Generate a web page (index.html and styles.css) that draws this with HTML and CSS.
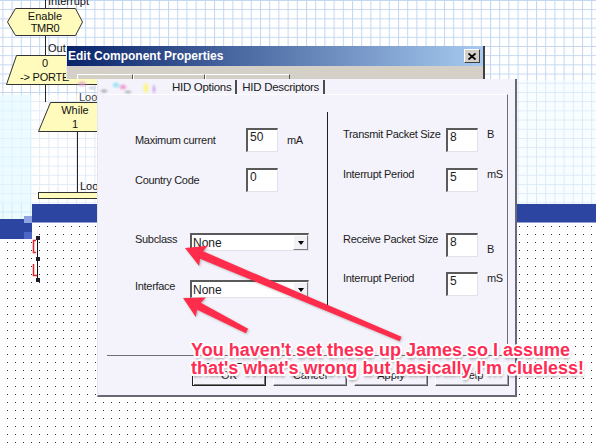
FILE: index.html
```html
<!DOCTYPE html>
<html lang="en">
<head>
    <meta charset="UTF-8">
    <title>Edit Component Properties</title>
    <link rel="stylesheet" href="styles.css">
</head>
<body>
<div class="desktop">
    <!-- flowchart canvas behind the dialogs -->
    <svg class="canvas" width="596" height="447" viewBox="0 0 596 447">
        <defs>
            <pattern id="grid" width="9.2" height="9.2" x="2.4" y="0" patternUnits="userSpaceOnUse">
                <path d="M0.5 0V9.2M0 0.5H9.2" fill="none" stroke="#c2d6ef" stroke-width="1"/>
            </pattern>
            <pattern id="dots" width="8" height="8" patternUnits="userSpaceOnUse">
                <rect x="7" y="2" width="1" height="1" fill="#2a2a2a"/>
            </pattern>
        </defs>
        <rect width="596" height="447" fill="#fff"/>
        <rect width="596" height="447" fill="url(#dots)"/>

        <rect width="596" height="204" fill="#fff"/>
        <rect width="596" height="204" fill="url(#grid)"/>
        <rect x="0" y="204" width="32" height="15" fill="#fff"/>
        <rect x="0" y="204" width="32" height="15" fill="url(#grid)"/>
        <!-- faded areas of the canvas -->
        <rect x="0" y="95" width="97" height="109" fill="#fff" opacity=".5"/>
        <rect x="0" y="95" width="32" height="124" fill="#dcf7ff" opacity=".55"/>
        <rect x="517" y="80" width="79" height="124" fill="#f3fbff" opacity=".55"/>

        <!-- selection bars -->
        <rect x="32" y="204" width="564" height="18.5" fill="#2c45a0"/>
        <rect x="0" y="219" width="32" height="20" fill="#2c45a0"/>
        <rect x="24" y="216" width="8" height="7" fill="#8ea3e2"/>
        <rect x="24" y="232" width="8" height="7" fill="#4b66c4"/>

        <!-- flowchart -->
        <g font-family="Liberation Sans, Arial, sans-serif" font-size="11" fill="#111">
            <path d="M45.5 0V8.5M45.5 35.5V55.5M45.5 84.5V102M77.5 131.5V192.5" stroke="#222" fill="none"/>
            <text x="48" y="5">Interrupt</text>
            <polygon points="7.5,22 15.5,8.5 75.5,8.5 82.5,22 75.5,35.5 15.5,35.5" fill="#fffbbd" stroke="#333"/>
            <text x="45" y="20" text-anchor="middle">Enable</text>
            <text x="45" y="32" text-anchor="middle" letter-spacing="-0.3">TMR0</text>
            <text x="48" y="52">Out</text>
            <polygon points="16.5,55.5 130,55.5 120,84.5 6.5,84.5" fill="#fffbbd" stroke="#333"/>
            <text x="45" y="67" text-anchor="middle">0</text>
            <text x="20" y="81" letter-spacing="-0.2">-&gt; PORTE</text>
            <text x="79" y="101" fill="#444">Loo</text>
            <polygon points="50.5,102.5 140,102.5 140,131.5 38.5,131.5" fill="#fffbbd" stroke="#333"/>
            <text x="75" y="114" text-anchor="middle">While</text>
            <text x="75" y="128" text-anchor="middle">1</text>
            <text x="80" y="190">Loo</text>
            <rect x="38.5" y="192.5" width="80" height="6" fill="#fffbbd" stroke="#333"/>
        </g>

        <!-- selected item handles -->
        <path d="M37.5 238V280" stroke="#111"/>
        <rect x="36" y="236" width="4" height="4" fill="#1c1c2c"/>
        <rect x="36" y="257" width="4" height="4" fill="#1c1c2c"/>
        <rect x="36" y="278" width="4" height="4" fill="#1c1c2c"/>
        <path d="M36 240.5H33.5V252.5H36M33.5 264V275.5H37" stroke="#e8202c" stroke-width="1.5" fill="none"/>
    </svg>

    <div class="dialog">
        <div class="dialog-title">
            <span class="dialog-caption">Edit Component Properties</span>
            <span class="close-btn">
                <svg width="8" height="7" viewBox="0 0 8 7"><path d="M0.5 0.5L7.5 6.5M7.5 0.5L0.5 6.5" stroke="#000" stroke-width="1.7"/></svg>
            </span>
        </div>
        <div class="tab-ghosts"><span></span><span></span><span></span></div>
    </div>

    <div class="panel">
        <div class="tabs">
            <span class="tab">HID Options</span>
            <span class="tab">HID Descriptors</span>
        </div>
        <div class="frame">
            <div class="col col-left">
                <div class="row">
                    <span class="lbl">Maximum current</span>
                    <span class="field">50</span>
                    <span class="unit">mA</span>
                </div>
                <div class="row row-gap">
                    <span class="lbl">Country Code</span>
                    <span class="field">0</span>
                </div>
                <div class="row row-combo row-section">
                    <span class="lbl">Subclass</span>
                    <span class="combo"><span class="combo-text">None</span><span class="combo-btn"></span></span>
                </div>
                <div class="row row-combo row-combo-next">
                    <span class="lbl">Interface</span>
                    <span class="combo"><span class="combo-text">None</span><span class="combo-btn"></span></span>
                </div>
            </div>
            <div class="divider"></div>
            <div class="col col-right">
                <div class="row">
                    <span class="lbl">Transmit Packet Size</span>
                    <span class="field">8</span>
                    <span class="unit">B</span>
                </div>
                <div class="row row-gap">
                    <span class="lbl">Interrupt Period</span>
                    <span class="field">5</span>
                    <span class="unit">mS</span>
                </div>
                <div class="row row-section">
                    <span class="lbl">Receive Packet Size</span>
                    <span class="field">8</span>
                    <span class="unit unit-low">B</span>
                </div>
                <div class="row row-gap-sm">
                    <span class="lbl">Interrupt Period</span>
                    <span class="field">5</span>
                    <span class="unit">mS</span>
                </div>
            </div>
        </div>
        <div class="actions">
            <span class="btn btn-default">OK</span>
            <span class="btn">Cancel</span>
            <span class="btn">Apply</span>
            <span class="btn">Help</span>
        </div>
    </div>

    <div class="glitch"></div>

    <svg class="arrows" width="596" height="447" viewBox="0 0 596 447">
        <g fill="#ff2d4b">
            <polygon transform="translate(185 248) rotate(22.9)" points="0,0 20,-11 18,-4 234,-2.5 234,2.5 18,4 20,11"/>
            <polygon transform="translate(183 298) rotate(27.3)" points="0,0 20,-11 18,-4 72,-2.5 72,2.5 18,4 20,11"/>
        </g>
    </svg>

    <p class="note">You haven't set these up James so I assume<br>that's what's wrong but basically I'm clueless!</p>
</div>
</body>
</html>
```

FILE: styles.css
```css
* {
    box-sizing: border-box;
    margin: 0;
    padding: 0;
}

body {
    width: 596px;
    height: 447px;
    overflow: hidden;
    font-family: "Liberation Sans", Arial, sans-serif;
    color: #1c1c1c;
}

.desktop {
    position: relative;
    width: 596px;
    height: 447px;
    overflow: hidden;
    background: #fff;
}

.canvas,
.arrows {
    position: absolute;
    left: 0;
    top: 0;
}

.arrows {
    pointer-events: none;
    filter: drop-shadow(1px 1px 1px rgba(0, 0, 0, 0.25));
}

/* grey dialog behind the property sheet */
.dialog {
    position: absolute;
    left: 66px;
    top: 46px;
    width: 419px;
    height: 33px;
    background: #d4d0c8;
    border-left: 1px solid #eeece6;
    border-right: 2px solid #404040;
}

.dialog-title {
    height: 20px;
    display: flex;
    align-items: center;
    padding: 0 3px 0 1px;
    background: linear-gradient(90deg, #0a246a, #a6caf0);
    color: #fff;
    font-size: 12px;
    font-weight: bold;
}

.dialog-caption {
    flex: 1;
}

.close-btn {
    width: 16px;
    height: 14px;
    display: flex;
    align-items: center;
    justify-content: center;
    background: #d4d0c8;
    border: 1px solid;
    border-color: #fff #404040 #404040 #fff;
}

.tab-ghosts {
    display: flex;
    padding: 8px 0 0 10px;
}

.tab-ghosts span {
    height: 5px;
    border-top: 1px solid #fff;
    border-left: 1px solid #fff;
    border-right: 1px solid #555;
}

.tab-ghosts span:nth-child(1) { width: 56px; }
.tab-ghosts span:nth-child(2) { width: 72px; }
.tab-ghosts span:nth-child(3) { width: 85px; }

/* property sheet */
.panel {
    position: absolute;
    left: 97px;
    top: 79px;
    width: 420px;
    height: 318px;
    background: #f4f3fb;
    border-left: 1px solid #e4e4ec;
    border-right: 2px solid #686876;
    border-bottom: 2px solid #686876;
}

.tabs {
    height: 15px;
    display: flex;
    align-items: center;
    padding-left: 74px;
    font-size: 11.5px;
    letter-spacing: -0.3px;
    color: #202020;
}

.tab {
    line-height: 14px;
    padding-right: 4px;
    border-right: 2px solid #4c4c4c;
}

.tab + .tab {
    padding-left: 5px;
}

.frame {
    margin-left: 9px;
    width: 401px;
    height: 262px;
    display: flex;
    border-top: 1px solid #fff;
    border-right: 1px solid #6e6e7c;
    border-bottom: 1px solid #6e6e7c;
}

.col-left {
    width: 220px;
    padding: 33px 0 0 28px;
}

.divider {
    width: 1px;
    height: 193px;
    margin-top: 17px;
    background: #1e1e1e;
}

.col-right {
    flex: 1;
    padding: 33px 0 0 15px;
}

.row {
    display: flex;
    height: 24px;
    font-size: 11px;
    letter-spacing: -0.3px;
}

.col-left .row {
    align-items: center;
}

.col-right .row {
    align-items: flex-start;
}

.lbl {
    flex: none;
    width: 111px;
    line-height: 13px;
}

.col-right .lbl {
    width: 103px;
}

.row-gap { margin-top: 16px; }
.row-gap-sm { margin-top: 15px; }
.row-section { margin-top: 41px; }

.col-left .row-combo {
    height: 18px;
    align-items: flex-start;
}

.row-combo .lbl {
    width: 55px;
}

.row-combo-next { margin-top: 29px; }

.field {
    flex: none;
    width: 32px;
    height: 24px;
    padding: 1px 2px 0;
    background: #fff;
    border-style: solid;
    border-width: 2px 1px 1px 2px;
    border-color: #5a5a5a #e2e2ea #e2e2ea #5a5a5a;
    font-size: 12px;
    line-height: 12px;
    letter-spacing: 0;
}

.unit {
    margin-left: 9px;
    line-height: 13px;
}

.unit-low {
    margin-top: 10px;
}

.combo {
    flex: none;
    display: flex;
    width: 119px;
    height: 18px;
    background: #fff;
    border-style: solid;
    border-width: 2px 1px 1px 2px;
    border-color: #5a5a5a #e2e2ea #e2e2ea #5a5a5a;
}

.combo-text {
    flex: 1;
    padding: 2px 0 0 1px;
    font-size: 12px;
    line-height: 12px;
    letter-spacing: 0;
}

.combo-btn {
    width: 15px;
    display: flex;
    align-items: center;
    justify-content: center;
    background: #f2f2f6;
    border: 1px solid;
    border-color: #fff #7c7c86 #7c7c86 #fff;
}

.combo-btn::after {
    content: "";
    border-left: 3.5px solid transparent;
    border-right: 3.5px solid transparent;
    border-top: 4px solid #000;
}

.actions {
    display: flex;
    gap: 7px;
    margin-top: 7px;
    padding-left: 94px;
}

.btn {
    width: 74px;
    height: 23px;
    display: flex;
    align-items: center;
    justify-content: center;
    font-size: 11px;
    background: #f4f3fb;
    border: 1px solid;
    border-color: #fff #555 #555 #fff;
    box-shadow: inset -1px -1px 0 #a0a0aa;
}

.btn-default {
    border-color: #222;
    box-shadow: inset 1px 1px 0 #fff, inset -1px -1px 0 #777;
}

/* smeared pixels round the first tabs */
.glitch {
    position: absolute;
    left: 64px;
    top: 79px;
    width: 108px;
    height: 18px;
    pointer-events: none;
    background:
        radial-gradient(ellipse 6px 4px at 18px 5px, rgba(214, 150, 200, 0.8), transparent),
        radial-gradient(ellipse 5px 3px at 40px 12px, rgba(120, 120, 130, 0.55), transparent),
        radial-gradient(ellipse 5px 4px at 52px 6px, rgba(120, 220, 240, 0.8), transparent),
        radial-gradient(ellipse 5px 4px at 59px 8px, rgba(240, 120, 200, 0.8), transparent),
        radial-gradient(ellipse 5px 3px at 64px 13px, rgba(150, 150, 160, 0.6), transparent),
        radial-gradient(ellipse 4px 7px at 82px 9px, rgba(255, 245, 90, 0.9), transparent),
        radial-gradient(ellipse 3px 6px at 90px 10px, rgba(200, 160, 240, 0.8), transparent),
        radial-gradient(ellipse 5px 3px at 28px 9px, rgba(170, 170, 180, 0.5), transparent);
}

/* red handwritten-style remark */
.note {
    position: absolute;
    left: 191px;
    top: 341px;
    white-space: nowrap;
    font-size: 18px;
    line-height: 18px;
    font-weight: bold;
    color: #ff2d55;
    text-shadow:
        -1.5px -1.5px 0 #fff, 1.5px -1.5px 0 #fff,
        -1.5px 1.5px 0 #fff, 1.5px 1.5px 0 #fff,
        0 -2px 0 #fff, 0 2px 0 #fff,
        -2px 0 0 #fff, 2px 0 0 #fff,
        1px 3px 3px rgba(0, 0, 0, 0.45);
}
```
